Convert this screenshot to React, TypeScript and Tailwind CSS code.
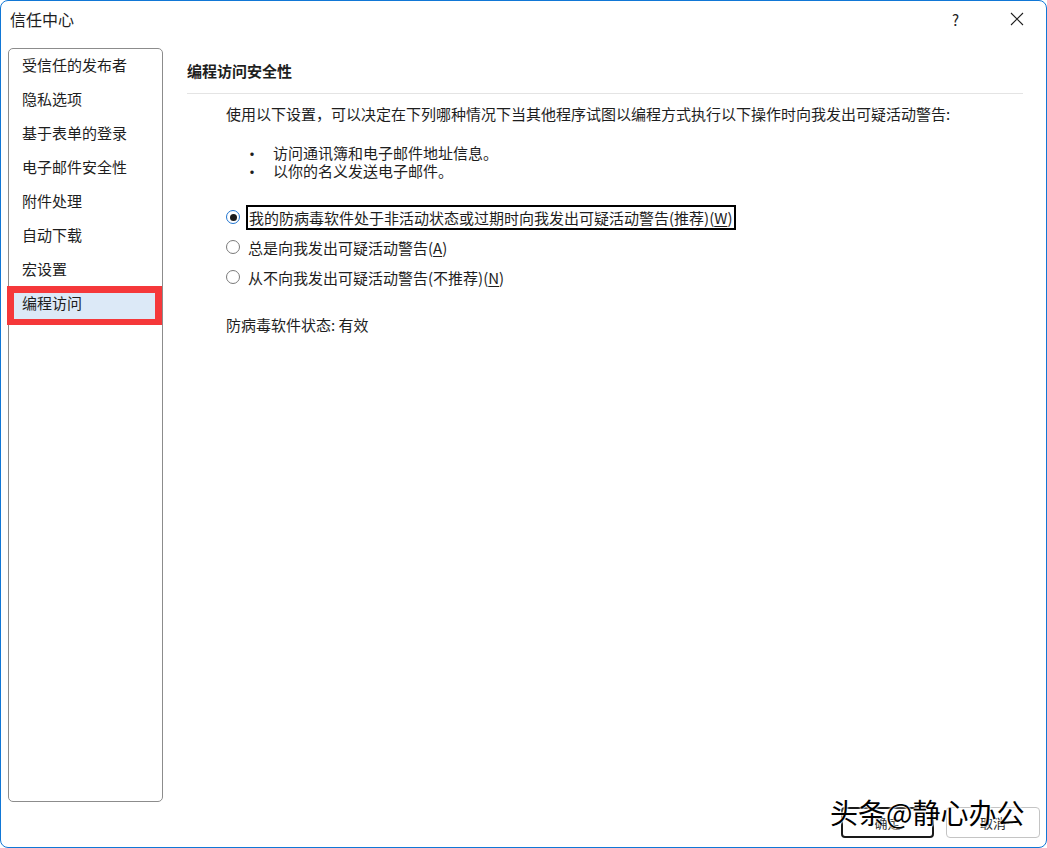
import React from "react";

const navItems = [
  "受信任的发布者",
  "隐私选项",
  "基于表单的登录",
  "电子邮件安全性",
  "附件处理",
  "自动下载",
  "宏设置",
  "编程访问",
];

const options = [
  { label: "我的防病毒软件处于非活动状态或过期时向我发出可疑活动警告(推荐)", key: "W", checked: true },
  { label: "总是向我发出可疑活动警告", key: "A", checked: false },
  { label: "从不向我发出可疑活动警告(不推荐)", key: "N", checked: false },
];

function Radio({ checked }: { checked: boolean }) {
  return checked ? (
    <span className="flex h-[14px] w-[14px] shrink-0 items-center justify-center rounded-full border border-[#1f74d0]">
      <span className="h-[7px] w-[7px] rounded-full bg-[#1b1b1b]" />
    </span>
  ) : (
    <span className="h-[14px] w-[14px] shrink-0 rounded-full border border-[#7a7a7a] bg-white" />
  );
}

export default function App() {
  return (
    <div
      className="relative h-[848px] w-[1047px] overflow-hidden bg-white text-[15px] text-[#1e1e1e]"
      style={{ fontFamily: '"Noto Sans CJK SC", "Noto Sans", sans-serif' }}
    >
      <div className="flex h-full flex-col rounded-[8px] border border-[#1177d6] bg-white">
        {/* title bar */}
        <div className="h-[47px] shrink-0">
          <div className="flex h-[36px] items-center pl-[9px]">
            <span className="text-[16px] leading-none">信任中心</span>
            <span className="ml-auto mr-[51px] text-[15px] leading-none text-[#222]">?</span>
            <svg width="14" height="14" viewBox="0 0 14 14" className="mr-[22px]">
              <path d="M1 1 L13 13 M13 1 L1 13" stroke="#1e1e1e" strokeWidth="1.1" />
            </svg>
          </div>
        </div>

        {/* body */}
        <div className="flex min-h-0 flex-1 pl-[7px] pr-[23px]">
          <div className="relative h-[754px] w-[155px] shrink-0 rounded-[5px] border border-[#8c8c8c]">
            {navItems.map((item, i) => {
              const selected = i === navItems.length - 1;
              return (
                <div key={item} className="relative flex h-[34px] items-center">
                  {selected && (
                    <div className="absolute inset-x-[5px] top-[6px] h-[26px] bg-[#dce9f7]" />
                  )}
                  <span className="relative pb-[4px] pl-[13px] leading-none">{item}</span>
                  {selected && (
                    <div className="absolute left-[-2px] top-[-1px] h-[39px] w-[155px] border-x-[7px] border-t-[7px] border-b-[6px] border-[#f5383a]" />
                  )}
                </div>
              );
            })}
          </div>

          <div className="ml-[24px] flex-1">
            <div className="pt-[13px] text-[15px] font-bold leading-[20px]">编程访问安全性</div>
            <div className="mt-[12px] h-px bg-[#e4e4e4]" />

            <div className="pl-[39px]">
              <p className="mt-[10px] leading-[20px]">
                使用以下设置，可以决定在下列哪种情况下当其他程序试图以编程方式执行以下操作时向我发出可疑活动警告:
              </p>

              <ul className="mt-[20px]">
                <li className="flex h-[18px] items-center leading-[18px]">
                  <span className="w-[47px] pl-[18px] text-[16px] leading-[16px]">•</span>
                  <span>访问通讯簿和电子邮件地址信息。</span>
                </li>
                <li className="flex h-[18px] items-center leading-[18px]">
                  <span className="w-[47px] pl-[18px] text-[16px] leading-[16px]">•</span>
                  <span>以你的名义发送电子邮件。</span>
                </li>
              </ul>

              <div className="mt-[22px]">
                {options.map((o) => (
                  <div key={o.key} className="flex h-[30px] items-center">
                    <Radio checked={o.checked} />
                    <span
                      className={
                        o.checked
                          ? "ml-[6px] border-2 border-black pl-[1px] pr-[2px] leading-[21px]"
                          : "ml-[8px] leading-[21px]"
                      }
                    >
                      {o.label}(<span className="underline underline-offset-2">{o.key}</span>)
                    </span>
                  </div>
                ))}
              </div>

              <p className="mt-[23px] leading-[20px]">防病毒软件状态: 有效</p>
            </div>
          </div>
        </div>

        {/* buttons */}
        <div className="mb-[9px] mt-[5px] flex h-[31px] shrink-0 justify-end gap-[12px] pr-[6px]">
          <button className="w-[93px] rounded-[4px] border-2 border-[#1a1a1a] bg-white text-[13px]">确定</button>
          <button className="w-[94px] rounded-[4px] border border-[#c4c4c4] bg-white text-[13px]">取消</button>
        </div>
      </div>

      {/* watermark */}
      <div className="absolute left-[830px] top-[795px] text-[28px] leading-[34px] text-black [text-shadow:0_0_2px_#fff,0_0_2px_#fff,0_0_3px_#fff]">
        头条@静心办公
      </div>
    </div>
  );
}
